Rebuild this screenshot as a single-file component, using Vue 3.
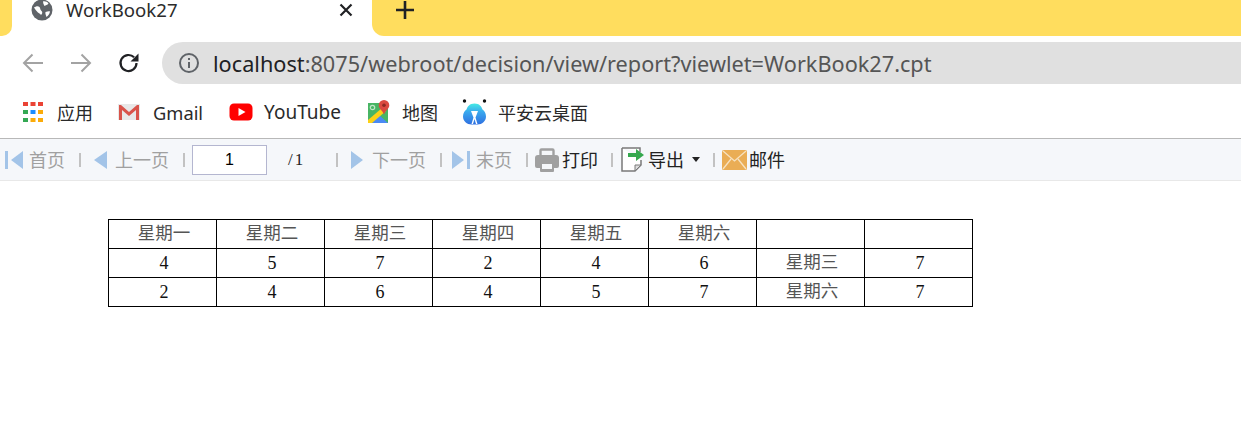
<script setup>
const rows = [
  ['星期一', '星期二', '星期三', '星期四', '星期五', '星期六', '', ''],
  ['4', '5', '7', '2', '4', '6', '星期三', '7'],
  ['2', '4', '6', '4', '5', '7', '星期六', '7']
]
</script>

<template>
  <div class="page">
    <header class="tabstrip">
      <div class="tab-edge"></div>
      <div class="tab">
        <svg class="globe" width="22" height="22" viewBox="0 0 22 22">
          <circle cx="11" cy="11" r="10.500" fill="#5f6368" />
          <path d="M3 8.500c1.500-1 4-2 5.500-.5 1 1 .5 3 2 4 1.200.8 1 3-.5 4-.8-1.500-3-2-4-3.500-1-1-2-2.500-3-4zM12 2.500c2-.5 4.500.5 5.500 2-1 1.500-3 1.500-4 2.500-1-1.500-1.500-3-1.500-4.500zM14.500 13c2-.5 3.500-1 4.500-.5-.3 2.500-2 4.500-3.500 5.500-.5-1.500-1.500-3.500-1-5z" fill="#fff" />
        </svg>
        <span class="tab-title">WorkBook27</span>
        <svg class="close" width="14" height="14" viewBox="0 0 14 14">
          <path d="M1.500 1.500l11 11M12.500 1.500l-11 11" stroke="#202124" stroke-width="2.200" fill="none" />
        </svg>
      </div>
      <div class="tab-rest">
        <svg width="18" height="18" viewBox="0 0 18 18">
          <path d="M9 0v18M0 9h18" stroke="#202124" stroke-width="2.600" fill="none" />
        </svg>
      </div>
    </header>

    <div class="navbar">
      <svg class="nav-icon" width="22" height="20" viewBox="0 0 22 20">
        <path d="M21 10H2M10.500 1.500L2 10l8.500 8.500" stroke="#a3a3a3" stroke-width="2" fill="none" />
      </svg>
      <svg class="nav-icon fwd" width="22" height="20" viewBox="0 0 22 20">
        <path d="M1 10h19M11.500 1.500L20 10l-8.500 8.500" stroke="#a3a3a3" stroke-width="2" fill="none" />
      </svg>
      <svg class="nav-icon reload" width="22" height="22" viewBox="0 0 22 22">
        <path d="M18.500 11a8 8 0 1 1-2.400-5.700" stroke="#202124" stroke-width="2.200" fill="none" />
        <path d="M20.500 1.500v8h-8z" fill="#202124" />
      </svg>
      <div class="omnibox">
        <svg class="info" width="20" height="20" viewBox="0 0 20 20">
          <circle cx="10" cy="10" r="9" stroke="#5f6368" stroke-width="2" fill="none" />
          <path d="M10 9v6" stroke="#5f6368" stroke-width="2" />
          <path d="M10 5v2" stroke="#5f6368" stroke-width="2" />
        </svg>
        <span class="url"><span class="host">localhost</span>:8075/webroot/decision/view/report?viewlet=WorkBook27.cpt</span>
      </div>
    </div>

    <nav class="bookmarks">
      <span class="bm bm-apps">
        <svg width="20" height="20" viewBox="0 0 20 20">
          <rect x="0" y="0" width="5" height="4" fill="#ea4335" /><rect x="7.500" y="0" width="5" height="4" fill="#ea4335" /><rect x="15" y="0" width="5" height="4" fill="#ea4335" />
          <rect x="0" y="8" width="5" height="4" fill="#34a853" /><rect x="7.500" y="8" width="5" height="4" fill="#1a8cff" /><rect x="15" y="8" width="5" height="4" fill="#fbab09" />
          <rect x="0" y="16" width="5" height="4" fill="#34a853" /><rect x="7.500" y="16" width="5" height="4" fill="#fbab09" /><rect x="15" y="16" width="5" height="4" fill="#fbab09" />
        </svg>
        应用
      </span>
      <span class="bm bm-gmail">
        <svg width="24" height="18" viewBox="0 0 24 18">
          <rect x="1" y="1" width="22" height="16" fill="#e8e8e8" />
          <path d="M2 17V2h2l8 7 8-7h2v15h-3V7l-7 6-7-6v10z" fill="#d9534a" />
        </svg>
        Gmail
      </span>
      <span class="bm bm-yt">
        <svg width="24" height="18" viewBox="0 0 24 18">
          <rect x="0.500" y="0.500" width="23" height="17" rx="4.500" fill="#f00" />
          <path d="M9.500 5l7 4-7 4z" fill="#fff" />
        </svg>
        YouTube
      </span>
      <span class="bm bm-maps">
        <svg width="23" height="24" viewBox="0 0 23 24">
          <path d="M1 3h20v20H1z" fill="#48b564" />
          <path d="M5 23l7-8 9 8z" fill="#4a8af4" />
          <path d="M1 23v-3L15 8l4 3L5 23z" fill="#fcd116" />
          <circle cx="5.500" cy="7.500" r="2.200" fill="none" stroke="#bfe6c8" stroke-width="1.200" />
          <path d="M17 0a5.300 5.300 0 0 1 5.300 5.300c0 3.500-3.500 4.700-5.300 9.200-1.800-4.500-5.300-5.700-5.300-9.200A5.300 5.300 0 0 1 17 0z" fill="#db4a3f" />
          <circle cx="17" cy="5.300" r="1.800" fill="#8e2a22" />
        </svg>
        地图
      </span>
      <span class="bm bm-cloud">
        <svg width="25" height="26" viewBox="0 0 25 26">
          <defs>
            <linearGradient id="cloudGrad" x1="0" y1="0" x2="0" y2="1">
              <stop offset="0" stop-color="#45ebe4" />
              <stop offset="0.400" stop-color="#3aa8ee" />
              <stop offset="1" stop-color="#2f6fe0" />
            </linearGradient>
          </defs>
          <circle cx="2.500" cy="2" r="1.700" fill="#111" />
          <circle cx="22.500" cy="2" r="1.700" fill="#111" />
          <path d="M12.500 4.500c5 0 7 3 8 6 1.500 1 3.500 3.500 3.500 7 0 4.500-4 8-8.500 8h-6C5 25.500 1 22 1 17.500c0-3.500 2-6 3.500-7 1-3 3-6 8-6z" fill="url(#cloudGrad)" />
          <path d="M9 12h7l-1.500 4-1 2.500 2 6.500h-1.500l-1.500-5-1.500 5H9.500l2-6.500-1-2.500z" fill="#fff" />
        </svg>
        平安云桌面
      </span>
    </nav>

    <div class="toolbar">
      <span class="tb first">
        <svg width="18" height="18" viewBox="0 0 18 18"><rect x="0" y="0" width="3" height="18" fill="#a3c4e8" /><path d="M18 0v18L6 9z" fill="#a3c4e8" /></svg>
        <em class="off g6">首页</em>
      </span>
      <i class="sep s14"></i>
      <span class="tb m14">
        <svg width="13" height="18" viewBox="0 0 13 18"><path d="M13 0v18L0 9z" fill="#a3c4e8" /></svg>
        <em class="off g8">上一页</em>
      </span>
      <i class="sep s14"></i>
      <input class="page-input" value="1" readonly />
      <span class="total">/1</span>
      <i class="sep s32"></i>
      <span class="tb m14">
        <svg width="12" height="18" viewBox="0 0 12 18"><path d="M0 0v18l12-9z" fill="#a3c4e8" /></svg>
        <em class="off g9">下一页</em>
      </span>
      <i class="sep s14"></i>
      <span class="tb m11">
        <svg width="18" height="18" viewBox="0 0 18 18"><path d="M0 0v18l12-9z" fill="#a3c4e8" /><rect x="15" y="0" width="3" height="18" fill="#a3c4e8" /></svg>
        <em class="off g6">末页</em>
      </span>
      <i class="sep s14"></i>
      <span class="tb m8">
        <svg width="24" height="24" viewBox="0 0 24 24">
          <path d="M5.500 8V2.500a1 1 0 0 1 1-1h11a1 1 0 0 1 1 1V8" fill="none" stroke="#a0a0a0" stroke-width="2.400" />
          <path d="M3 7h18a3 3 0 0 1 3 3v8a2 2 0 0 1-2 2H2a2 2 0 0 1-2-2v-8a3 3 0 0 1 3-3z" fill="#a0a0a0" />
          <path d="M5 16h14v7a1 1 0 0 1-1 1H6a1 1 0 0 1-1-1z" fill="#a0a0a0" />
          <path d="M7 16h10v5H7z" fill="#f5f7fa" />
        </svg>
        <em class="on g3">打印</em>
      </span>
      <i class="sep s13"></i>
      <span class="tb m9">
        <svg width="23" height="25" viewBox="0 0 23 25">
          <path d="M1 1h18v4M20 13v5l-6 6H1V1" fill="#fff" stroke="#7a7a7a" stroke-width="1.500" />
          <path d="M20 18h-6v6z" fill="#ddd" stroke="#7a7a7a" stroke-width="1" />
          <path d="M7 6h8V2l8 6-8 6v-4H7z" fill="#35a84e" />
        </svg>
        <em class="on g4">导出</em>
      </span>
      <svg class="caret" width="8" height="5" viewBox="0 0 8 5"><path d="M0 0h8L4 5z" fill="#222" /></svg>
      <i class="sep s13"></i>
      <span class="tb m8">
        <svg width="25" height="20" viewBox="0 0 25 20">
          <rect width="25" height="20" rx="1.500" fill="#eaad55" />
          <path d="M1 1l11.500 10L24 1M1 19l8-10M24 19l-8-10" stroke="#f7e2c0" stroke-width="1.300" fill="none" />
        </svg>
        <em class="on g2">邮件</em>
      </span>
    </div>

    <main class="report">
      <table class="sheet">
        <tr v-for="(row, r) in rows" :key="r">
          <td v-for="(cell, c) in row" :key="c" :class="{ cjk: cell.length > 1 }">{{ cell }}</td>
        </tr>
      </table>
    </main>
  </div>
</template>

<style>
html, body { margin: 0; background: #fff; overflow: hidden; }
</style>

<style scoped>
.page {
  width: 1241px;
  height: 446px;
  overflow: hidden;
  background: #fff;
  font-family: "Noto Sans", "Noto Sans CJK SC", sans-serif;
  color: #202124;
}
.tabstrip { display: flex; height: 36px; }
.tab-edge { width: 12px; background: #ffdd5e; border-bottom-right-radius: 10px; }
.tab {
  width: 360px;
  display: flex;
  align-items: center;
  height: 20px;
  padding-left: 19px;
  box-sizing: border-box;
}
.globe { margin-right: 13px; }
.tab-title { font-size: 18.600px; line-height: 20px; width: 274px; color: #2c2c2c; }
.close { flex: none; margin-left: -1px; }
.tab-rest {
  flex: 1;
  background: #ffdd5e;
  border-bottom-left-radius: 12px;
  padding: 1px 0 0 24px;
  box-sizing: border-box;
}
.tab-rest svg { display: block; }
.navbar { display: flex; align-items: center; height: 42px; margin-top: 6px; }
.nav-icon { margin-left: 22px; flex: none; }
.nav-icon.fwd { margin-left: 26px; }
.nav-icon.reload { margin-left: 26px; }
.omnibox {
  flex: 1;
  height: 42px;
  margin-left: 22px;
  background: #e0e0e0;
  border-radius: 21px 0 0 21px;
  display: flex;
  align-items: center;
  padding-left: 17px;
}
.info { flex: none; margin-right: 14px; }
.url { font-size: 21.700px; color: #555; white-space: nowrap; }
.host { color: #202124; }
.bookmarks {
  display: flex;
  align-items: center;
  height: 34px;
  margin-top: 11px;
  font-size: 18px;
  color: #2a2a2a;
}
.bm { display: inline-flex; align-items: center; white-space: nowrap; }
.bm-apps { margin-left: 23px; gap: 14px; }
.bm-gmail { margin-left: 24px; gap: 12px; font-size: 18.300px; }
.bm-yt { margin-left: 26px; gap: 11px; font-size: 19px; }
.bm-maps { margin-left: 26px; gap: 12px; }
.bm-cloud { margin-left: 24px; gap: 11px; }
.toolbar {
  display: flex;
  align-items: center;
  height: 41px;
  margin-top: 9px;
  border-top: 1px solid #b8b8b8;
  border-bottom: 1px solid #e8e8e8;
  background: #f5f7fa;
  font-size: 18px;
}
.tb { display: inline-flex; align-items: center; white-space: nowrap; }
.tb em { font-style: normal; padding-bottom: 2px; }
.first { margin-left: 5px; }
.m14 { margin-left: 14px; }
.m11 { margin-left: 11px; }
.m9 { margin-left: 9px; }
.m8 { margin-left: 8px; }
.off { color: #a0a0a0; }
.on { color: #222; }
.g2 { margin-left: 2px; }
.g3 { margin-left: 3px; }
.g4 { margin-left: 4px; }
.g6 { margin-left: 6px; }
.g8 { margin-left: 8px; }
.g9 { margin-left: 9px; }
.sep { width: 2px; height: 14px; margin-right: -1px; background: #c2c2c2; flex: none; }
.s14 { margin-left: 14px; }
.s13 { margin-left: 13px; }
.s32 { margin-left: 32px; }
.page-input {
  width: 75px;
  height: 30px;
  margin-left: 8px;
  box-sizing: border-box;
  border: 1px solid #b4b6d0;
  background: #fff;
  text-align: center;
  font: 16px "Liberation Sans", sans-serif;
  color: #000;
  padding: 0;
  outline: none;
}
.total { margin-left: 21px; width: 16px; font: 17px "Liberation Serif", serif; letter-spacing: 2px; color: #222; }
.caret { margin-left: 8px; flex: none; }
.report { padding: 38px 0 0 108px; }
.sheet {
  border-collapse: collapse;
  table-layout: fixed;
  width: 865px;
  font-family: "Liberation Serif", "Noto Sans CJK SC", serif;
  font-size: 18px;
}
.sheet td {
  width: 108px;
  height: 29px;
  padding: 0 0 0 3px;
  border: 1px solid #000;
  text-align: center;
  box-sizing: border-box;
  color: #111;
  line-height: 20px;
}
.sheet td.cjk { color: #555; font-size: 17.500px; padding-bottom: 2px; }
</style>
